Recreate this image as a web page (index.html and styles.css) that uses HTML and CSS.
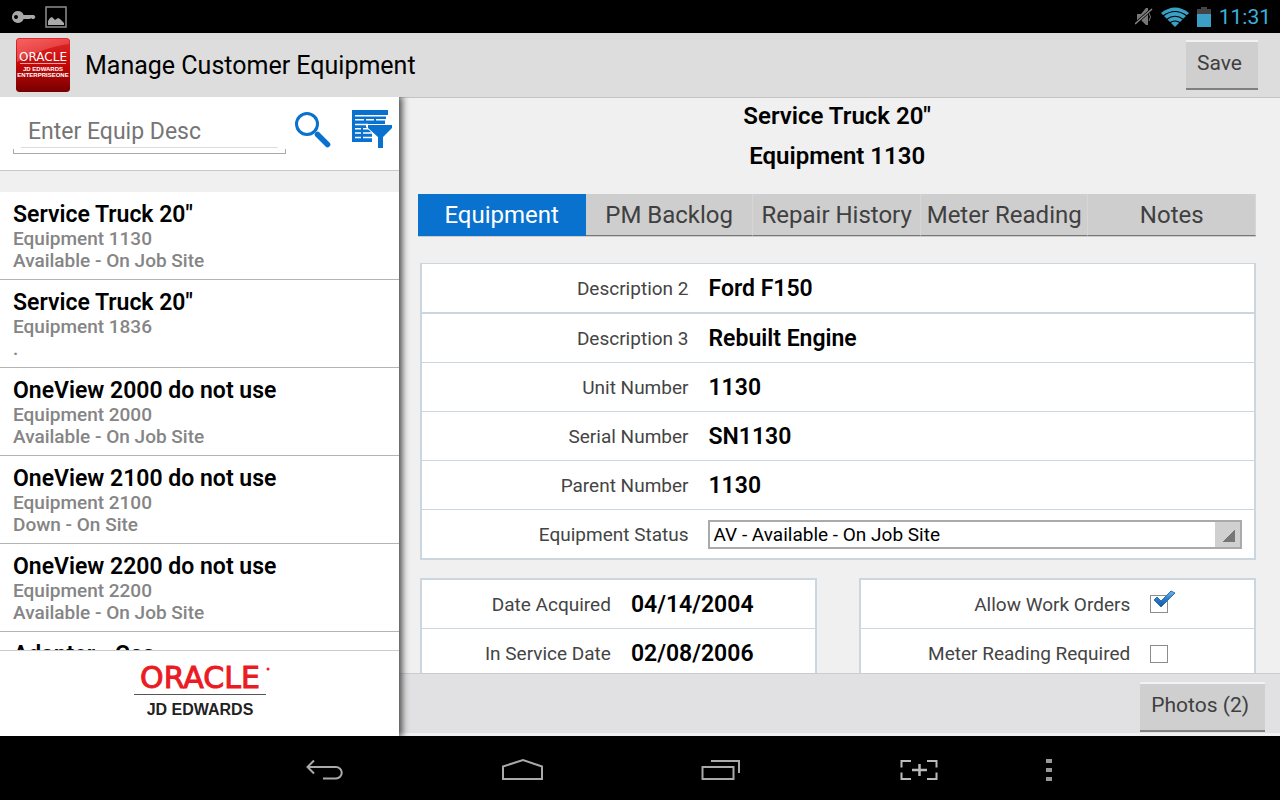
FILE: index.html
```html
<!DOCTYPE html>
<html lang="en">
<head>
<meta charset="utf-8">
<meta name="viewport" content="width=device-width, initial-scale=1">
<title>Manage Customer Equipment</title>
<link rel="stylesheet" href="styles.css">
</head>
<body>
<div class="statusbar">
  <div class="status-group">
    <svg width="24" height="14" viewBox="0 0 24 14" role="img" aria-label="VPN"><path fill="#a8a8a8" fill-rule="evenodd" d="M6 1a6 6 0 1 0 5.600 8H18l1-1 1 1h2l1.500-2L22 5H11.600A6 6 0 0 0 6 1zM4 5a2 2 0 1 1 0 4 2 2 0 0 1 0-4z"/></svg>
    <svg width="22" height="22" viewBox="0 0 22 22" role="img" aria-label="Screenshot saved"><rect x="1" y="1" width="20" height="20" fill="none" stroke="#8f8f8f" stroke-width="1.500"/><path fill="#aaa" d="M3 19v-4l2-3 2-1 2 2 1 1 3-2 2 1 4 4v2z"/></svg>
  </div>
  <div class="status-group status-right">
    <svg width="18" height="20" viewBox="0 0 18 20" role="img" aria-label="Muted"><path fill="#777" d="M2 7h4l5-6h2v17h-2l-5-5H2z"/><path fill="none" stroke="#777" d="M14 6q3 4 0 8"/><path stroke="#000" stroke-width="3" d="M0 17 17 2"/><path stroke="#888" stroke-width="1.500" d="M0 17 17 2"/></svg>
    <svg width="28" height="20" viewBox="0 0 28 20" role="img" aria-label="Wi-Fi"><path fill="#3ba0c6" d="M0 6Q14-5 28 6L14 20z"/><path fill="none" stroke="#000" stroke-width="1.200" d="M2 9q12-9 24 0M5.500 12.500q8.500-6.500 17 0M8.500 16q5.500-4 11 0"/></svg>
    <svg width="14" height="20" viewBox="0 0 14 20" role="img" aria-label="Battery"><path fill="#444" d="M4 0h6v2h4v5H0V2h4z"/><path fill="#3ba0c6" d="M0 7h14v13H0z"/></svg>
    <time class="clock">11:31</time>
  </div>
</div>

<header class="appbar">
  <svg class="app-icon" width="54" height="54" viewBox="0 0 54 54" role="img" aria-label="Oracle JD Edwards EnterpriseOne">
    <defs>
      <linearGradient id="red" x1="0" y1="0" x2="0" y2="1"><stop offset="0" stop-color="#e22a2a"/><stop offset=".5" stop-color="#c40808"/><stop offset="1" stop-color="#780000"/></linearGradient>
      <linearGradient id="gloss" x1="0" y1="0" x2="1" y2="1"><stop offset="0" stop-color="#ff7a7a"/><stop offset="1" stop-color="#e03030"/></linearGradient>
    </defs>
    <rect width="54" height="54" rx="3" fill="url(#red)"/>
    <path fill="url(#gloss)" opacity=".7" d="M1 3q0-2 2-2h48q2 0 2 2v3Q32 8 1 24z"/>
    <g fill="#fff" text-anchor="middle"><text class="icon-brand" x="27" y="23">ORACLE</text><text class="icon-sub" x="27" y="33">JD EDWARDS</text><text class="icon-sub" x="27" y="39">ENTERPRISEONE</text></g>
    <path stroke="#f3a0a0" d="M4 25.500h46"/>
  </svg>
  <h1 class="app-title">Manage Customer Equipment</h1>
  <button class="btn btn-save" type="button">Save</button>
</header>

<main class="workspace">
  <aside class="sidebar">
    <form class="search">
      <input class="search-input" type="text" placeholder="Enter Equip Desc" aria-label="Enter Equip Desc">
      <button class="icon-btn search-btn" type="button" aria-label="Search"><svg width="36" height="36" viewBox="0 0 36 36"><circle cx="12" cy="12" r="10.500" fill="none" stroke="#0872ce" stroke-width="3"/><path d="m22.500 22.500 10 10" stroke="#0872ce" stroke-width="5.500" stroke-linecap="round"/></svg></button>
      <button class="icon-btn" type="button" aria-label="Filter"><svg width="40" height="38" viewBox="0 0 40 38"><path fill="#0872ce" d="M0 0h36v10H33v5H20v17H0z"/><path stroke="#fff" stroke-width="1.500" d="M3 5.700h31M3 9.700h9m2 0h8m2 0h10M3 14.500h13M3 18.700h6m2 0h9M3 23h6m2 0h11M3 27.500h6m2 0h11"/><path fill="#fff" d="M34 5h2v5h-2zM14 14h26v3L30 29v9h-6V27L14 17z"/><path fill="#0872ce" d="M16 15h24v3l-9 9v11h-5V27l-10-9z"/></svg></button>
    </form>
    <ul class="equip-list">
      <li class="equip-item"><h3 class="equip-name">Service Truck 20"</h3><p class="equip-meta">Equipment 1130</p><p class="equip-meta">Available - On Job Site</p></li>
      <li class="equip-item"><h3 class="equip-name">Service Truck 20"</h3><p class="equip-meta">Equipment 1836</p><p class="equip-meta">.</p></li>
      <li class="equip-item"><h3 class="equip-name">OneView 2000 do not use</h3><p class="equip-meta">Equipment 2000</p><p class="equip-meta">Available - On Job Site</p></li>
      <li class="equip-item"><h3 class="equip-name">OneView 2100 do not use</h3><p class="equip-meta">Equipment 2100</p><p class="equip-meta">Down - On Site</p></li>
      <li class="equip-item"><h3 class="equip-name">OneView 2200 do not use</h3><p class="equip-meta">Equipment 2200</p><p class="equip-meta">Available - On Job Site</p></li>
      <li class="equip-item"><h3 class="equip-name">Adapter - Gas</h3></li>
    </ul>
    <div class="brand">
      <svg class="brand-logo" width="150" height="60" viewBox="0 0 150 60" role="img" aria-label="Oracle JD Edwards"><text class="brand-oracle" x="75" y="24" text-anchor="middle">ORACLE</text><circle cx="143" cy="5" r="1.500" fill="#e22"/><path stroke="#555" d="M9 30.500h132"/><text class="brand-jde" x="75" y="51" text-anchor="middle">JD EDWARDS</text></svg>
    </div>
  </aside>

  <section class="detail">
    <div class="detail-body">
      <h2 class="detail-title">Service Truck 20"</h2>
      <h2 class="detail-title">Equipment 1130</h2>
      <nav class="tabs">
        <button class="tab tab-active" type="button">Equipment</button>
        <button class="tab" type="button">PM Backlog</button>
        <button class="tab" type="button">Repair History</button>
        <button class="tab" type="button">Meter Reading</button>
        <button class="tab" type="button">Notes</button>
      </nav>
      <div class="cards">
        <div class="card card-wide">
          <div class="row"><span class="label">Description 2</span><b class="value">Ford F150</b></div>
          <div class="row"><span class="label">Description 3</span><b class="value">Rebuilt Engine</b></div>
          <div class="row"><span class="label">Unit Number</span><b class="value">1130</b></div>
          <div class="row"><span class="label">Serial Number</span><b class="value">SN1130</b></div>
          <div class="row"><span class="label">Parent Number</span><b class="value">1130</b></div>
          <div class="row"><label class="label" for="status">Equipment Status</label><div class="select-wrap"><select class="select" id="status"><option>AV - Available - On Job Site</option></select></div></div>
        </div>
        <div class="card card-dates">
          <div class="row"><span class="label">Date Acquired</span><b class="value">04/14/2004</b></div>
          <div class="row"><span class="label">In Service Date</span><b class="value">02/08/2006</b></div>
        </div>
        <div class="card card-flags">
          <div class="row"><label class="label" for="allow">Allow Work Orders</label><span class="check"><input class="checkbox" type="checkbox" id="allow" checked><svg class="tick" width="24" height="20" viewBox="0 0 24 20" aria-hidden="true"><defs><linearGradient id="tickFill" x1="0" y1="0" x2="0" y2="1"><stop offset="0" stop-color="#7db8ea"/><stop offset=".5" stop-color="#2a7cc8"/><stop offset="1" stop-color="#1258a0"/></linearGradient></defs><path fill="url(#tickFill)" stroke="#2a6fb0" d="m2 10 3-3 4 4L19 1l4 2L9 17z"/></svg></span></div>
          <div class="row"><label class="label" for="meter">Meter Reading Required</label><span class="check"><input class="checkbox" type="checkbox" id="meter"></span></div>
        </div>
      </div>
    </div>
    <footer class="detail-footer"><button class="btn btn-photos" type="button">Photos (2)</button></footer>
  </section>
</main>

<nav class="navbar">
  <button class="nav-btn" type="button" aria-label="Back"><svg width="40" height="24" viewBox="0 0 40 24"><path fill="none" stroke="#aaa" stroke-width="2" d="M9 2.500 2.500 9 9 15.500M3 9h28a5.500 5.500 0 0 1 0 11.500H18"/></svg></button>
  <button class="nav-btn" type="button" aria-label="Home"><svg width="42" height="24" viewBox="0 0 42 24"><path fill="none" stroke="#aaa" stroke-width="2" d="M1 21V8.500L21 2l19 6.500V21z"/></svg></button>
  <button class="nav-btn" type="button" aria-label="Recent apps"><svg width="40" height="24" viewBox="0 0 40 24"><path fill="none" stroke="#aaa" stroke-width="2" d="M1.500 9h31v12h-31zM10 3h28v12"/></svg></button>
  <button class="nav-btn" type="button" aria-label="Capture screen"><svg width="38" height="24" viewBox="0 0 38 24"><path fill="none" stroke="#bbb" stroke-width="2" d="M1.500 9.500V3H11m16 0h9.500v6.500m0 5V21H27m-16 0H1.500v-6.500"/><path stroke="#bbb" stroke-width="2.500" d="M12 12h15M19.500 6v12"/></svg></button>
  <button class="nav-btn nav-more" type="button" aria-label="More options"><svg width="6" height="24" viewBox="0 0 6 24"><path fill="#999" d="M0 1h6v4H0zM0 10h6v4H0zM0 19h6v4H0z"/></svg></button>
</nav>
</body>
</html>
```

FILE: styles.css
```css
* { box-sizing: border-box; }

body {
  margin: 0;
  height: 100vh;
  display: flex;
  flex-direction: column;
  overflow: hidden;
  background: #000;
  color: #000;
  font-family: Roboto, "Noto Sans", sans-serif;
}

h1, h2, h3, p, ul { margin: 0; padding: 0; }
button, input, select { font-family: inherit; }
svg { display: block; flex: none; }

/* System status bar */
.statusbar {
  flex: 0 0 33px;
  display: flex;
  justify-content: space-between;
  padding: 0 9px 0 12px;
}
.status-group { display: flex; align-items: center; gap: 9px; }
.status-right { gap: 8px; }
.clock { color: #3db1dc; font-size: 21px; line-height: 32px; }

/* Application header */
.appbar {
  flex: 0 0 64px;
  display: flex;
  align-items: center;
  padding: 0 22px 0 16px;
  background: #ddd;
}
.app-icon { border-radius: 3px; }
.icon-brand { font: 12px "DejaVu Sans", sans-serif; }
.icon-sub { font: bold 6px "Liberation Sans", sans-serif; }
.app-title { flex: 1; padding-left: 15px; font-size: 25px; font-weight: 400; }

.btn {
  height: 50px;
  padding: 0 16px 5px 11px;
  border: 0;
  border-top: 2px solid #f2f2f2;
  border-bottom: 2px solid #808080;
  background: #cfcfcf;
  color: #404040;
  font-size: 21px;
}

/* Two-pane workspace */
.workspace { flex: 1; min-height: 0; display: flex; background: #f0f0f0; }

.sidebar {
  flex: 0 0 31.2%;
  min-width: 0;
  display: flex;
  flex-direction: column;
  background: #fff;
  box-shadow: 2px 0 7px 1px #444;
  clip-path: inset(0 -12px 0 0);
  z-index: 1;
}
.search {
  flex: 0 0 74px;
  display: flex;
  align-items: flex-start;
  padding: 12px 7px 0 13px;
  border-bottom: 1px solid #c8c8c8;
}
.search-input {
  flex: 1;
  min-width: 0;
  height: 45px;
  padding: 0 15px;
  border: 0;
  background:
    linear-gradient(#aaa, #aaa) 0 100% / 1px 5px no-repeat,
    linear-gradient(#aaa, #aaa) 100% 100% / 1px 5px no-repeat,
    linear-gradient(#aaa, #aaa) 0 100% / 100% 1px no-repeat,
    linear-gradient(#ddd, #ddd) 50% 38px / 94% 1px no-repeat;
  font-size: 23px;
}
.search-input::placeholder { color: #757575; opacity: 1; }
.icon-btn { padding: 1px 0 0; border: 0; background: none; }
.search-btn { margin: 2px 21px 0 9px; }

.equip-list {
  flex: 1;
  min-height: 0;
  overflow: hidden;
  padding-top: 21px;
  background: #f0f0f0;
  list-style: none;
}
.equip-item {
  padding: 10px 13px 7px;
  border-bottom: 1px solid #b4b4b4;
  background: #fff;
}
.equip-name { font-size: 23px; line-height: 26px; font-weight: 600; }
.equip-meta { color: #858585; font-size: 19px; line-height: 22px; font-weight: 500; }

.brand {
  flex: 0 0 86px;
  display: flex;
  justify-content: center;
  padding: 13px 0 0;
  border-top: 1px solid #c8cdd0;
}
.brand-logo { overflow: visible; }
.brand-oracle { fill: #ea1b22; stroke: #ea1b22; font: 30px "DejaVu Sans", sans-serif; }
.brand-jde { fill: #222; font: bold 16px "Liberation Sans", sans-serif; }

.detail {
  flex: 1;
  min-width: 0;
  display: flex;
  flex-direction: column;
  border-top: 1px solid #c4c4c4;
}
.detail-body { flex: 1; min-height: 0; overflow: hidden; padding: 0 24px 0 19px; }
.detail-title {
  font-size: 24px;
  line-height: 40px;
  font-weight: 600;
  text-align: center;
}
.detail-title:first-child { margin-top: -2px; }

.tabs {
  display: grid;
  grid-template-columns: repeat(5, 1fr);
  margin-top: 18px;
  border-bottom: 1px solid #ccc;
}
.tab {
  height: 42px;
  padding: 0;
  border: 0;
  border-right: 1px solid #d6d6d6;
  border-bottom: 1px solid #777;
  background: #cecece;
  color: #404040;
  font-size: 24px;
  white-space: nowrap;
}
.tab-active { border-color: #0872ce; background: #0872ce; color: #fff; }

.cards {
  display: grid;
  grid-template-columns: 1fr 1fr;
  gap: 18px 42px;
  margin: 26px 0 0 2px;
}
.card { border: 2px solid #ccd6de; background: #fff; }
.card-wide { grid-column: 1 / -1; border-top-width: 1px; }
.row {
  height: 49px;
  display: flex;
  align-items: center;
  gap: 20px;
  border-bottom: 1px solid #ccd6de;
}
.card-wide .row:first-child { height: 50px; border-bottom-width: 2px; }
.card-wide .row:last-child { height: 48px; }
.row:last-child { border-bottom: 0; }
.label {
  flex: 0 0 32%;
  color: #444;
  font-size: 19px;
  text-align: right;
  white-space: nowrap;
}
.card-dates .label { flex-basis: 48%; }
.card-flags .label { flex-basis: 68.5%; }
.value { font-size: 23px; font-weight: 600; }

.select-wrap { position: relative; flex: 1; margin-right: 12px; }
.select-wrap::after {
  content: "";
  position: absolute;
  top: 2px;
  right: 2px;
  bottom: 2px;
  width: 25px;
  background: linear-gradient(135deg, #d0d0d0 50%, #777 50%) 7px 7px / 13px 13px no-repeat, #d0d0d0;
  pointer-events: none;
}
.select {
  display: block;
  width: 100%;
  height: 29px;
  padding: 0 30px 0 3px;
  border: 2px solid #aaa;
  border-radius: 0;
  appearance: none;
  background: #fff;
  color: #000;
  font-size: 19px;
}

.check { position: relative; display: flex; }
.checkbox {
  width: 18px;
  height: 18px;
  margin: 0;
  border: 1px solid #8c8c8c;
  appearance: none;
  background: #fff;
}
.tick { position: absolute; left: 2px; top: -5px; pointer-events: none; }

.detail-footer {
  flex: 0 0 63px;
  display: flex;
  justify-content: flex-end;
  align-items: flex-start;
  padding: 8px 15px 0;
  border-top: 1px solid #ccc;
  border-bottom: 3px solid #f0f0f0;
  background: #e1e1e3;
}

/* System navigation bar */
.navbar {
  flex: 0 0 64px;
  display: flex;
  justify-content: center;
  align-items: center;
  padding: 3px 0 0 25px;
}
.nav-btn {
  width: 198px;
  padding: 0;
  display: flex;
  justify-content: center;
  border: 0;
  background: none;
}
.nav-more { width: 62px; }
```
